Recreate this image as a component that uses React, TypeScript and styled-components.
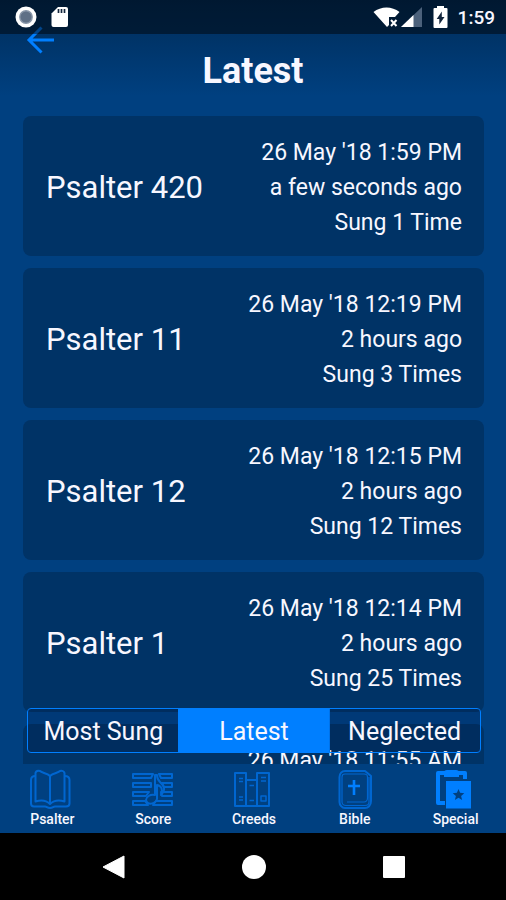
import React from "react";
import styled, { createGlobalStyle } from "styled-components";

const color = {
  page: "#004080",
  card: "#003366",
  accent: "#007fff",
  icon: "#0066d0",
  text: "#f7f7ff",
};

const GlobalStyle = createGlobalStyle`
  * { box-sizing: border-box; }
  body {
    margin: 0;
    background: ${color.page};
    color: ${color.text};
    font-family: Roboto, "Liberation Sans", sans-serif;
  }
  button { font: inherit; color: inherit; border: 0; padding: 0; background: none; cursor: pointer; }
  svg { display: block; }
`;

const Screen = styled.div`
  position: relative;
  display: flex;
  flex-direction: column;
  height: 100vh;
  background: linear-gradient(#002e5c, #003366 34px, ${color.page} 96px);
`;

const StatusBar = styled.div`
  position: absolute;
  inset: 0 0 auto 0;
  z-index: 2;
  display: flex;
  justify-content: space-between;
  align-items: center;
  height: 34px;
  padding: 0 11px 0 15px;
  background: rgba(0, 0, 0, 0.46);
`;

const StatusGroup = styled.div<{ $gap: number }>`
  display: flex;
  align-items: center;
  gap: ${(p) => p.$gap}px;
`;

const Clock = styled.time`
  padding-top: 2px;
  font-size: 19px;
  line-height: 24px;
  font-weight: 500;
`;

const Header = styled.header`
  display: flex;
  flex-direction: column;
  padding: 26px 24px 28px;
`;

const BackButton = styled.button`
  align-self: flex-start;
  height: 28px;
`;

const Title = styled.h1`
  margin: 0;
  font-size: 36px;
  line-height: 34px;
  font-weight: 700;
  text-align: center;
`;

const Content = styled.main`
  position: relative;
  flex: 1;
  min-height: 0;
`;

const SongList = styled.ul`
  display: flex;
  flex-direction: column;
  gap: 12px;
  height: 100%;
  margin: 0;
  padding: 0 22px 0 23px;
  list-style: none;
  overflow-y: auto;
  scrollbar-width: none;
`;

const SongCard = styled.li`
  flex: none;
  display: flex;
  justify-content: space-between;
  align-items: center;
  padding: 19px 22px 16px 23px;
  border-radius: 8px;
  background: ${color.card};
`;

const SongName = styled.span`
  font-size: 31px;
  line-height: 40px;
`;

const SongStats = styled.div`
  display: flex;
  flex-direction: column;
  align-items: flex-end;
  font-size: 23px;
  line-height: 35px;
`;

const Segments = styled.div`
  position: absolute;
  inset: auto 25px 11px 27px;
  display: grid;
  grid-template-columns: repeat(3, 1fr);
  height: 45px;
  border: 1px solid ${color.accent};
  border-radius: 4px;
`;

const Segment = styled.button<{ $active: boolean }>`
  margin: 0 ${(p) => (p.$active ? "-1px" : "0")};
  padding-top: 2px;
  font-size: 25px;
  line-height: 40px;
  background: ${(p) => (p.$active ? color.accent : "rgba(0, 0, 40, 0.1)")};
`;

const TabBar = styled.nav`
  display: grid;
  grid-template-columns: repeat(5, 1fr);
  height: 69px;
  padding: 4px 0 0 2px;
  background: ${color.page};
`;

const Tab = styled.button<{ $active: boolean }>`
  display: flex;
  flex-direction: column;
  align-items: center;
  color: ${(p) => (p.$active ? color.accent : color.icon)};
`;

const TabLabel = styled.span`
  font-size: 14px;
  line-height: 16px;
  font-weight: 500;
  color: ${color.text};
`;

const SystemNav = styled.nav`
  display: grid;
  grid-template-columns: repeat(3, 140px);
  justify-content: center;
  height: 67px;
  padding-left: 2px;
  background: #000;
`;

const SystemButton = styled.button`
  display: flex;
  justify-content: center;
  align-items: center;
`;

const RecordIcon = () => (
  <svg width="22" height="22" viewBox="0 0 22 22" aria-hidden="true">
    <circle cx="11" cy="11" r="10.5" fill="#fff" />
    <circle cx="11" cy="11" r="6.2" fill="#5f7086" stroke="#8896a8" strokeWidth="1.4" />
  </svg>
);

const CardIcon = () => (
  <svg width="18" height="22" viewBox="0 0 18 22" aria-hidden="true">
    <path d="M7 1h8a2 2 0 0 1 2 2v16a2 2 0 0 1-2 2H2.500a2 2 0 0 1-2-2V7.500z" fill="#fff" />
    <path d="M7.500 3v4M10.500 3v4M13.500 3v4" stroke="#13263d" strokeWidth="1.700" />
  </svg>
);

const WifiIcon = () => (
  <svg width="28" height="22" viewBox="0 0 28 22" aria-hidden="true">
    <path d="M0.500 6C8 0 19 0 26.500 6L22 11h-6v8l-2 2z" fill="#fff" />
    <path d="M18 14l5.500 6M23.500 14l-5.500 6" stroke="#fff" strokeWidth="2" />
  </svg>
);

const SignalIcon = () => (
  <svg width="22" height="22" viewBox="0 0 22 22" aria-hidden="true">
    <path d="M21 1v20H0z" fill="#4b617b" />
    <path d="M12.500 9V21H0z" fill="#fff" />
  </svg>
);

const BatteryIcon = () => (
  <svg width="15" height="22" viewBox="0 0 15 22" aria-hidden="true">
    <path d="M4 2V0h7v2h2.500a1 1 0 0 1 1 1v18a1 1 0 0 1-1 1h-12a1 1 0 0 1-1-1V3a1 1 0 0 1 1-1z" fill="#fff" />
    <path d="M8.800 5.500v5.500h2.700L6.300 18.500V13H3.700z" fill="#13263d" />
  </svg>
);

const ArrowIcon = () => (
  <svg width="32" height="28" viewBox="0 0 32 28" fill="none" stroke={color.accent} strokeWidth="3" aria-hidden="true">
    <path d="M30 14H5M17.500 1.500L5 14l12.500 12.500" />
  </svg>
);

const TabIcon = ({ children }: { children: React.ReactNode }) => (
  <svg width="44" height="43" viewBox="0 0 44 43" fill="none" stroke="currentColor" strokeWidth="2" strokeLinejoin="round" aria-hidden="true">
    {children}
  </svg>
);

const PsalterIcon = () => (
  <TabIcon>
    <path d="M20 8C17 5 12 5 10 3C8 2.500 6 3 5.500 5V33.500C10 32 16 32 20 36C24 32 30 32 34.500 33.500V5C34 3 32 2.500 30 3C28 5 23 5 20 8V36" />
    <path d="M5.500 8C2 8 1 9.500 1 12V35.500C1 38 2 38.500 4 38.500H15C17 38.500 17 40 20 40C23 40 23 38.500 25 38.500H36C38 38.500 39.500 38 39.500 35.500V12C39.500 9.500 38 8 34.500 8" />
  </TabIcon>
);

const ScoreIcon = () => (
  <TabIcon>
    <g>
      <path d="M2 6H22L20 10H2zM28 6H41V10H30zM2 15H20V19H2zM31 15H41V19H33zM2 24H18L15 28H2zM30 24H41V28H31zM2 33H14L17 37H2zM25 33H41V37H22z" />
      <path d="M24 7V27C19 26 15 29 15 32C16 37 24 37 26 31V17C31 18 32 22 30 27C36 21 32 17 29 14C27 12 26 10 26 7z" />
    </g>
  </TabIcon>
);

const CreedsIcon = () => (
  <TabIcon>
    <path d="M3 5H14V38H3zM14 12H25V38H14zM25 5H37V38H25z" />
    <path d="M7 10.500H11M7 13.500H11M7 29H11M7 32H11M17.500 17.500H22M17.500 32.500H22M29 9.500H34M29 13H34M29 28H34V33H29z" strokeWidth="1.500" />
  </TabIcon>
);

const BibleIcon = () => (
  <TabIcon>
    <path d="M12 3H32L38 8V33C38 37.500 35 40 32 40H12C9 40 6.500 37 6.500 34V9C6.500 5.500 9 3 12 3z" />
    <path d="M12 6H31C33.500 6 34.500 7 34.500 9V30M9 34V9C9 7 10 6 12 6M9 34C9 36 11 37.500 13 37.500H32C34.500 37.500 36 36 36 34V9M14 34H31C33 34 34.500 32 34.500 30" strokeWidth="1.200" />
    <path d="M21 12V27M15 18H27" strokeWidth="2.600" stroke={color.accent} />
  </TabIcon>
);

const SpecialIcon = () => (
  <TabIcon>
    <path d="M11 5H4V35H11M24 5H31V11" strokeWidth="4" />
    <path d="M10 5Q10 2 13 2H22Q25 2 25 5V9H10z" fill="currentColor" stroke="none" />
    <path d="M12 13H37V40.500H12z" fill="currentColor" stroke="none" />
    <path d="M24.500 21l1.600 3.800 4.200.4-3.200 2.700 1 4.100-3.600-2.200-3.600 2.200 1-4.100-3.200-2.700 4.200-.4z" fill={color.page} stroke="none" />
  </TabIcon>
);

const songs = [
  { name: "Psalter 420", date: "26 May '18 1:59 PM", ago: "a few seconds ago", sung: "Sung 1 Time" },
  { name: "Psalter 11", date: "26 May '18 12:19 PM", ago: "2 hours ago", sung: "Sung 3 Times" },
  { name: "Psalter 12", date: "26 May '18 12:15 PM", ago: "2 hours ago", sung: "Sung 12 Times" },
  { name: "Psalter 1", date: "26 May '18 12:14 PM", ago: "2 hours ago", sung: "Sung 25 Times" },
  { name: "", date: "26 May '18 11:55 AM", ago: "", sung: "" },
];

const orders = ["Most Sung", "Latest", "Neglected"];

const tabs = [
  { label: "Psalter", Icon: PsalterIcon },
  { label: "Score", Icon: ScoreIcon },
  { label: "Creeds", Icon: CreedsIcon },
  { label: "Bible", Icon: BibleIcon },
  { label: "Special", Icon: SpecialIcon },
];

export default function App() {
  const [order, setOrder] = React.useState("Latest");
  const [tab, setTab] = React.useState("Special");

  return (
    <>
      <GlobalStyle />
      <Screen>
        <StatusBar>
          <StatusGroup $gap={14}>
            <RecordIcon />
            <CardIcon />
          </StatusGroup>
          <StatusGroup $gap={10}>
            <StatusGroup $gap={0}>
              <WifiIcon />
              <SignalIcon />
            </StatusGroup>
            <BatteryIcon />
            <Clock>1:59</Clock>
          </StatusGroup>
        </StatusBar>
        <Header>
          <BackButton aria-label="Back">
            <ArrowIcon />
          </BackButton>
          <Title>Latest</Title>
        </Header>
        <Content>
          <SongList>
            {songs.map((song) => (
              <SongCard key={song.date}>
                <SongName>{song.name}</SongName>
                <SongStats>
                  <span>{song.date}</span>
                  <span>{song.ago || "\u00a0"}</span>
                  <span>{song.sung || "\u00a0"}</span>
                </SongStats>
              </SongCard>
            ))}
          </SongList>
          <Segments>
            {orders.map((name) => (
              <Segment key={name} $active={name === order} aria-pressed={name === order} onClick={() => setOrder(name)}>
                {name}
              </Segment>
            ))}
          </Segments>
        </Content>
        <TabBar>
          {tabs.map(({ label, Icon }) => (
            <Tab key={label} $active={label === tab} onClick={() => setTab(label)}>
              <Icon />
              <TabLabel>{label}</TabLabel>
            </Tab>
          ))}
        </TabBar>
        <SystemNav>
          <SystemButton aria-label="System back">
            <svg width="24" height="24" viewBox="0 0 24 24" fill="#fff"><path d="M22 1v22L1 12z" stroke="#fff" strokeLinejoin="round" /></svg>
          </SystemButton>
          <SystemButton aria-label="Home">
            <svg width="24" height="24" viewBox="0 0 24 24" fill="#fff"><circle cx="12" cy="12" r="12" /></svg>
          </SystemButton>
          <SystemButton aria-label="Recent apps">
            <svg width="24" height="24" viewBox="0 0 24 24" fill="#fff"><rect x="1" y="1" width="22" height="22" rx="1" /></svg>
          </SystemButton>
        </SystemNav>
      </Screen>
    </>
  );
}
